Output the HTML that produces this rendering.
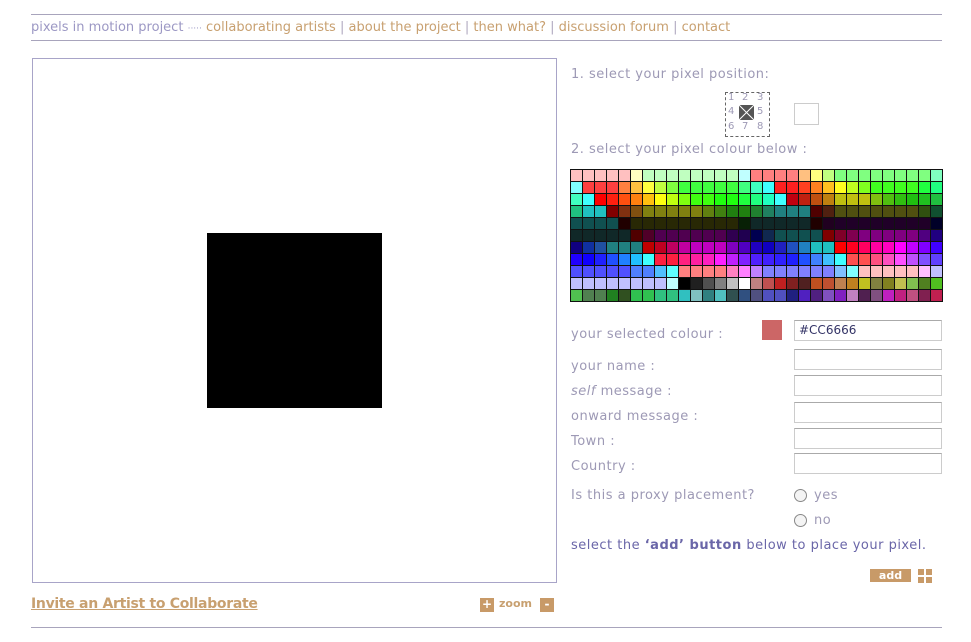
<!DOCTYPE html>
<html><head><meta charset="utf-8"><style>
body{margin:0;width:971px;height:642px;background:#fff;font-family:"DejaVu Sans","Liberation Sans",sans-serif;position:relative;overflow:hidden}
.a{position:absolute}
.hl{position:absolute;left:31px;width:911px;height:1px;background:#a8a4bc}
.lab{position:absolute;left:571px;font-size:13px;color:#9d99b5;white-space:nowrap;letter-spacing:0.5px}
.inp{position:absolute;left:794px;width:146px;height:19px;border:1px solid #ccc;border-top-color:#aaa;background:#fff}
#pal{position:absolute;left:570px;top:169px;display:grid;grid-template-columns:repeat(31,11px);grid-auto-rows:11px;gap:1px;background:#111;padding:1px}
.r{position:absolute;left:794px;width:11px;height:11px;border:1px solid #888;border-radius:50%;background:#f4f4f4}
.d{position:absolute;font-size:10px;color:#9d99b5}
</style></head><body>
<div class="hl" style="top:14px"></div>
<div class="a" style="left:31px;top:20px;font-size:13px;white-space:nowrap"><span style="color:#9c98c4">pixels in motion project</span> <span style="color:#9c98c4;font-size:9px">·····</span> <span style="color:#c8a070">collaborating artists</span> <span style="color:#b0a8c0">|</span> <span style="color:#c8a070">about the project</span> <span style="color:#b0a8c0">|</span> <span style="color:#c8a070">then what?</span> <span style="color:#b0a8c0">|</span> <span style="color:#c8a070">discussion forum</span> <span style="color:#b0a8c0">|</span> <span style="color:#c8a070">contact</span></div>
<div class="hl" style="top:40px"></div>

<div class="a" style="left:32px;top:58px;width:523px;height:523px;border:1px solid #a8a4c8"></div>
<div class="a" style="left:207px;top:233px;width:175px;height:175px;background:#000"></div>

<div class="lab" style="top:67px">1. select your pixel position:</div>
<div class="d" style="left:728px;top:92px">1</div><div class="d" style="left:742px;top:92px">2</div><div class="d" style="left:757px;top:92px">3</div>
<div class="d" style="left:728px;top:106px">4</div><div class="d" style="left:757px;top:106px">5</div>
<div class="d" style="left:728px;top:121px">6</div><div class="d" style="left:742px;top:121px">7</div><div class="d" style="left:757px;top:121px">8</div>
<div class="a" style="left:725px;top:92px;width:43px;height:43px;border:1px dashed #666"></div>
<svg class="a" style="left:739px;top:105px" width="15" height="15"><rect width="15" height="15" fill="#555"/><path d="M0 0L15 15M15 0L0 15" stroke="#fff" stroke-width="1"/></svg>
<div class="a" style="left:794px;top:103px;width:23px;height:20px;border:1px solid #ccc"></div>
<div class="lab" style="top:142px">2. select your pixel colour below :</div>
<div id="pal"></div>

<div class="lab" style="top:327px">your selected colour :</div>
<div class="a" style="left:762px;top:320px;width:20px;height:20px;background:#cc6666"></div>
<div class="inp" style="top:320px;font-size:12px;color:#336;line-height:19px;padding-left:4px;width:142px">#CC6666</div>
<div class="lab" style="top:359px">your name :</div><div class="inp" style="top:349px"></div>
<div class="lab" style="top:384px"><i>self</i> message :</div><div class="inp" style="top:375px"></div>
<div class="lab" style="top:409px">onward message :</div><div class="inp" style="top:402px"></div>
<div class="lab" style="top:434px">Town :</div><div class="inp" style="top:428px"></div>
<div class="lab" style="top:459px">Country :</div><div class="inp" style="top:453px"></div>
<div class="lab" style="top:488px">Is this a proxy placement?</div>
<div class="r" style="top:489px"></div><div class="lab" style="left:814px;top:488px">yes</div>
<div class="r" style="top:514px"></div><div class="lab" style="left:814px;top:513px">no</div>
<div class="lab" style="top:538px;color:#6a66a8">select the <b>‘add’ button</b> below to place your pixel.</div>
<div class="a" style="left:870px;top:569px;width:41px;height:13px;background:#c89a68;color:#fff;font-size:11px;font-weight:bold;text-align:center;line-height:13px">add</div>
<svg class="a" style="left:918px;top:569px" width="14" height="14"><rect width="6" height="6" fill="#c89a68"/><rect x="8" width="6" height="6" fill="#c89a68"/><rect y="8" width="6" height="6" fill="#c89a68"/><rect x="8" y="8" width="6" height="6" fill="#c89a68"/></svg>

<div class="a" style="left:31px;top:596px;font-size:14px;color:#c8a070;text-decoration:underline;font-weight:bold;letter-spacing:-0.3px">Invite an Artist to Collaborate</div>
<div class="a" style="left:480px;top:598px;width:14px;height:14px;background:#c89a68;color:#fff;font-size:12px;font-weight:bold;text-align:center;line-height:13px">+</div>
<div class="a" style="left:499px;top:597px;font-size:11px;color:#c8a070;font-weight:bold">zoom</div>
<div class="a" style="left:540px;top:598px;width:14px;height:14px;background:#c89a68;color:#fff;font-size:12px;font-weight:bold;text-align:center;line-height:12px">-</div>
<div class="hl" style="top:627px"></div>
<script>
var R=[
"ffc0c0 ffc0c0 ffc0c0 ffc0c0 ffc0c0 ffffc0 c0ffc0 c0ffc0 c0ffc0 c0ffc0 c0ffc0 c0ffc0 c0ffc0 c0ffc0 c0ffff ff8080 ff8080 ff8080 ff8080 ffc080 ffff80 c0ff80 80ff80 80ff80 80ff80 80ff80 80ff80 80ff80 80ff80 80ff80 80ffc0",
"80ffff ff4040 ff4040 ff4040 ff8040 ffc040 ffff40 c0ff40 80ff40 40ff40 40ff40 40ff40 40ff40 40ff40 40ff80 40ffc0 40ffff ff2020 ff2020 ff4020 ff8020 ffc020 ffff20 c0ff20 80ff20 40ff20 40ff20 40ff20 40ff20 20ff40 20ff80",
"40ffc0 40ffff ff0000 ff2010 ff5010 ff8010 ffc010 ffff10 c0ff10 80ff10 40ff10 40ff10 20ff10 20ff10 20ff40 20ff80 20ffc0 40ffff c00010 c02010 c05010 c08010 c0c010 c0c010 c0c010 80c010 50c010 30c010 20c010 20c020 20c040",
"20c080 20c0c0 20c0c0 800000 803010 805010 808010 808010 808010 808010 808010 608010 408010 208010 208010 208030 208060 208080 208080 208080 500000 502010 505010 505010 505010 505010 505010 505010 505010 305010 105030",
"105050 105050 105050 105050 200000 282805 282805 282805 282805 282805 282805 282805 282805 282805 082005 102828 102828 102828 102828 102828 200000 200020 200028 200028 200028 200028 200028 200028 200028 200028 000028",
"102828 102828 102828 102828 102828 500000 500028 500050 500050 500050 500050 500050 500050 300050 200050 000050 102850 105050 105050 105050 105050 800000 800028 800050 800080 800080 800080 800080 800080 500080 200080",
"100080 1030a0 2050a0 208080 208080 208080 c00000 c00020 c00060 c000a0 c000c0 c000c0 c000c0 8000c0 5000c0 2000c0 1000c0 2020c0 2050c0 2080c0 20c0c0 20c0c0 ff0000 ff0020 ff0060 ff00a0 ff00c0 ff00ff c000ff 8000ff 4000ff",
"2000ff 1000ff 2020ff 2050ff 2080ff 20c0ff 40ffff ff2040 ff2040 ff2080 ff20a0 ff20c0 ff20ff c020ff 8020ff 5020ff 4020ff 3020ff 2020ff 2050ff 4080ff 40c0ff 40ffff ff5050 ff5050 ff5080 ff50c0 ff50ff c050ff 8050ff 6040ff",
"5050ff 5050ff 5050ff 5050ff 5050ff 5080ff 5080ff 50c0ff 60ffff ff8080 ff8080 ff8080 ff8080 ff80c0 ff80ff c080ff 8080ff 8080ff 8080ff 8080ff 8080ff 8080ff 80c0ff 80ffff ffc0c0 ffc0c0 ffc0c0 ffc0c0 ffc0c0 ffc0ff c0c0ff",
"c0c0ff c0c0ff c0c0ff c0c0ff c0c0ff c0c0ff c0c0ff c0c0ff c0ffff 000000 202020 505050 808080 c0c0c0 ffffff c08080 c05050 c02020 802020 502020 c05020 c05030 c08050 c08020 c0c020 808040 808020 c0c050 80c050 508020 50c020",
"50c050 508050 508050 208020 305020 30c050 30c050 30c080 30c080 30c0c0 80c0c0 308080 50c0c0 305050 305080 505080 5050c0 5050c0 202080 5020c0 502080 8050c0 8020c0 c080c0 502050 805080 c020c0 c02080 c05080 802050 c02050"];
var p=document.getElementById('pal'),h='';
R.forEach(function(r){r.split(' ').forEach(function(c){h+='<div style="background:#'+c+'"></div>';});});
p.innerHTML=h;
</script>
</body></html>
